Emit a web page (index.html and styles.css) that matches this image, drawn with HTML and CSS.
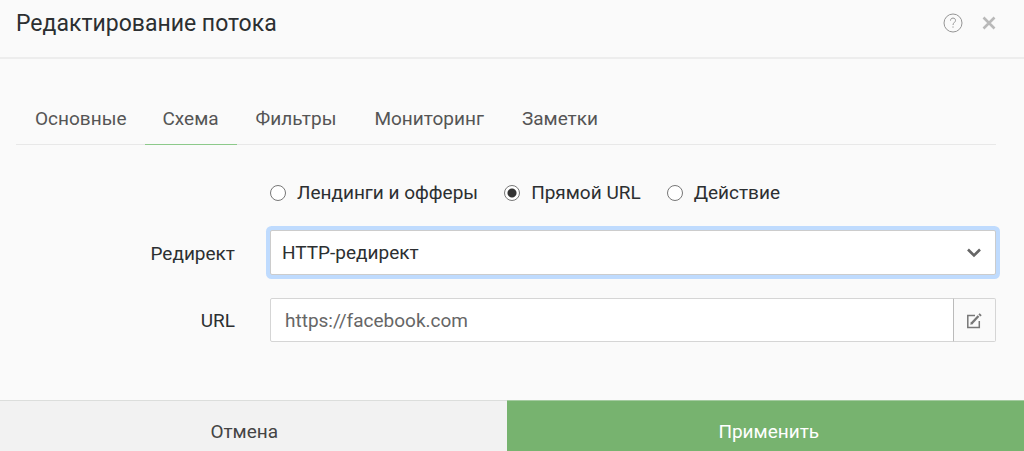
FILE: index.html
```html
<!DOCTYPE html>
<html lang="ru">
<head>
<meta charset="utf-8">
<meta name="viewport" content="width=device-width, initial-scale=1">
<title>Редактирование потока</title>
<link rel="stylesheet" href="styles.css">
</head>
<body>
<main class="modal">
  <header class="modal-header">
    <h1 class="modal-title">Редактирование потока</h1>
    <div class="header-actions">
      <button class="icon-button" type="button" aria-label="Помощь">
        <svg width="20" height="20" viewBox="0 0 20 20" fill="none" stroke="#959595"><circle cx="10" cy="10" r="9"/><path d="M7.500 7.600C7.500 6 8.500 5.100 10 5.100s2.500.9 2.500 2.300c0 2-2.500 2.200-2.500 4.600M10 13.400v1.300"/></svg>
      </button>
      <button class="icon-button" type="button" aria-label="Закрыть">
        <svg width="14" height="14" viewBox="0 0 14 14" fill="none" stroke="#b9b9b9" stroke-width="2.600"><path d="M1.500 1.500l11 11M12.500 1.500l-11 11"/></svg>
      </button>
    </div>
  </header>
  <div class="modal-body">
    <nav class="tabs">
      <a class="tab" href="#general">Основные</a>
      <a class="tab tab-active" href="#schema">Схема</a>
      <a class="tab" href="#filters">Фильтры</a>
      <a class="tab" href="#monitoring">Мониторинг</a>
      <a class="tab" href="#notes">Заметки</a>
    </nav>
    <form class="form" id="stream-form">
      <div class="radios">
        <label class="radio-label"><input class="radio" type="radio" name="schema">Лендинги и офферы</label>
        <label class="radio-label"><input class="radio" type="radio" name="schema" checked>Прямой URL</label>
        <label class="radio-label"><input class="radio" type="radio" name="schema">Действие</label>
      </div>
      <label class="field-label" for="redirect">Редирект</label>
      <div class="select-wrap">
        <select class="select" id="redirect"><option>HTTP-редирект</option></select>
        <svg class="chevron" width="14" height="10" viewBox="0 0 14 10" fill="none" stroke="#666" stroke-width="2.600"><path d="M1 1.500l6 6 6-6"/></svg>
      </div>
      <label class="field-label" for="url">URL</label>
      <div class="input-group">
        <input class="input" id="url" type="text" value="https://facebook.com">
        <button class="edit-button" type="button" aria-label="Изменить URL">
          <svg width="16" height="16" viewBox="0 0 16 16" fill="none" stroke="#777"><path stroke-width="1.500" d="M9 2.500H1.800v12h11.500V8"/><path stroke-width="2.400" d="M5.500 10.500l7-7.500"/><path fill="#777" stroke="none" d="M4.300 11.700l.6-3 2.300 2.200zM12.400 1.500L13.700.3l2 1.900-1.300 1.300z"/></svg>
        </button>
      </div>
    </form>
  </div>
  <footer class="modal-footer">
    <button class="action" type="button">Отмена</button>
    <button class="action action-primary" type="submit" form="stream-form">Применить</button>
  </footer>
</main>
</body>
</html>
```
FILE: styles.css
```css
* { box-sizing: border-box; }

body {
  margin: 0;
  background: #fafafa;
  color: #2c2f31;
  font: 19px/24px Roboto, "Liberation Sans", sans-serif;
}

button, input, select { font: inherit; color: inherit; margin: 0; }

.modal { height: 100vh; overflow: hidden; }

.modal-header {
  display: flex;
  align-items: flex-start;
  justify-content: space-between;
  padding: 8px 28px 17px 16px;
  border-bottom: 2px solid #ededed;
}

.modal-title { margin: 0; font-size: 23px; line-height: 32px; font-weight: 400; }

.header-actions { display: flex; align-items: center; gap: 19px; height: 30px; }

.icon-button { display: flex; padding: 0; border: 0; background: none; }

.modal-body { padding: 35px 28px 58px 16px; }

.tabs { display: flex; border-bottom: 1px solid #e8e8e8; }

.tab {
  margin-bottom: -1px;
  padding: 13px 19px;
  border-bottom: 1px solid transparent;
  color: #555;
  text-decoration: none;
}

.tab-active { border-bottom-color: #8cc98a; padding-inline: 17px 18px; }

.form {
  display: grid;
  grid-template-columns: 219px 1fr;
  column-gap: 35px;
  row-gap: 23px;
  align-items: center;
  padding-top: 36px;
}

.radios { grid-column: 2; display: flex; gap: 26px; margin-bottom: 2px; }

.radio-label { display: flex; align-items: center; gap: 11px; }

.radio {
  appearance: none;
  width: 16px;
  height: 16px;
  border: 1px solid #777;
  border-radius: 50%;
  background: #fff;
}

.radio:checked { background: radial-gradient(circle, #333 4px, #fff 5px); }

.field-label { padding-top: 2px; text-align: right; }

.select-wrap { position: relative; }

.select {
  display: block;
  width: 100%;
  height: 45px;
  padding: 1px 11px 0;
  appearance: none;
  border: 1px solid #ccc;
  border-radius: 2px;
  outline: 0;
  background: #fff;
  box-shadow: 0 0 0 4px #bfdbfe;
}

.chevron { position: absolute; right: 15px; top: 18px; pointer-events: none; }

.input-group { display: flex; height: 44px; }

.input {
  flex: 1;
  min-width: 0;
  padding: 1px 14px 0;
  border: 1px solid #d5d5d5;
  border-radius: 2px 0 0 2px;
  background: #fff;
  color: #666;
}

.edit-button {
  display: flex;
  align-items: center;
  justify-content: center;
  width: 43px;
  padding: 2px 1px 0 0;
  border: 1px solid #d5d5d5;
  border-left-color: #bbb;
  border-radius: 0 2px 2px 0;
  margin-left: -1px;
  background: #fafafa;
}

.modal-footer {
  display: grid;
  grid-template-columns: 1fr 1fr;
  margin: 0 -7px 0 -18px;
}

.action {
  height: 62px;
  padding: 0;
  border: 0;
  border-top: 1px solid #dcdedc;
  background: #f2f2f2;
  color: #444;
}

.action-primary { border-top-color: #a4cba0; background: #77b36f; color: #fff; }
```
